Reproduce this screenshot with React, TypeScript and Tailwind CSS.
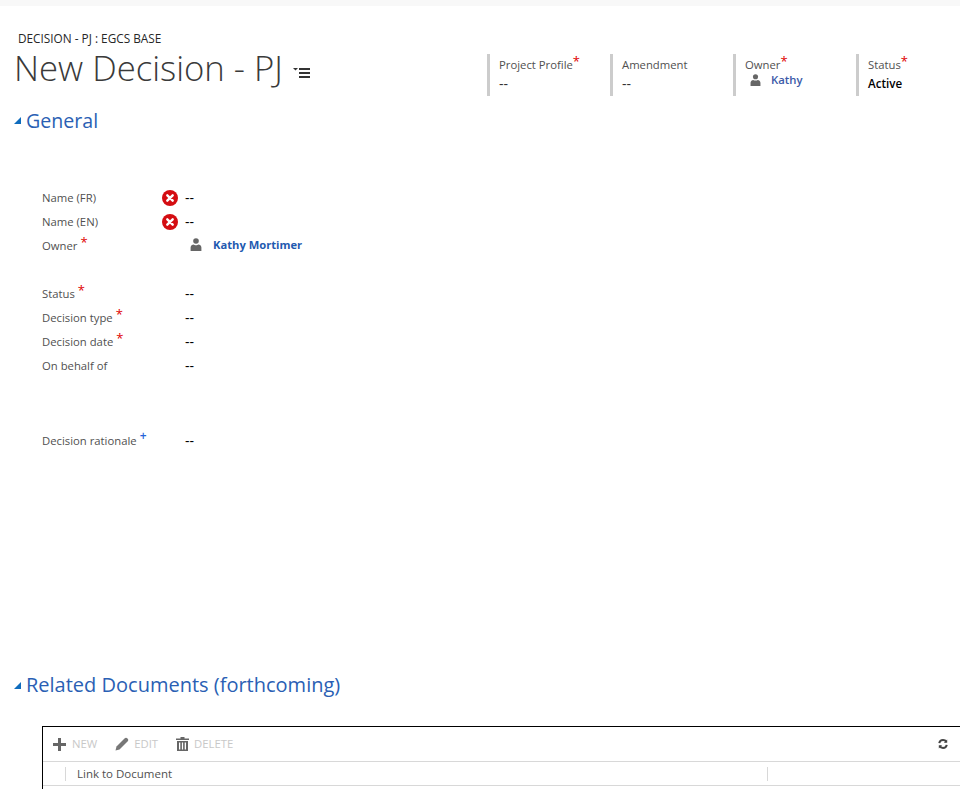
import React from "react";

const font = { fontFamily: '"Open Sans", "Noto Sans", sans-serif' };

function Person({ className }: { className?: string }) {
  return (
    <svg viewBox="0 0 12 13" className={className} fill="#666666">
      <circle cx="6" cy="3" r="2.8" />
      <path d="M0.6 13 V9.6 C0.6 7.4 2.2 6.6 3.6 6.4 C4.4 7.4 7.6 7.4 8.4 6.4 C9.8 6.6 11.4 7.4 11.4 9.6 V13 Z" />
    </svg>
  );
}

function Caret() {
  return (
    <svg viewBox="0 0 7 7" className="w-[7px] h-[7px] shrink-0" fill="#0f6cbd">
      <path d="M7 0 V7 H0 Z" />
    </svg>
  );
}

function Req() {
  return <span className="text-[#e00000] text-[13px] leading-none relative -top-[4px] ml-[3px]">*</span>;
}

function Tile({ label, req, children }: { label: string; req?: boolean; children: React.ReactNode }) {
  return (
    <div className="w-[123px] shrink-0 h-[42px] border-l-[3px] border-[#cccccc] pl-[9px]">
      <div className="h-[22px] flex items-center text-[11.3px] text-[#505050] whitespace-nowrap">
        {label}
        {req && <span className="text-[#e00000] text-[13px] leading-none relative -top-[4px]">*</span>}
      </div>
      {children}
    </div>
  );
}

function Row({ label, mark, error, children }: { label: string; mark?: "req" | "rec"; error?: boolean; children?: React.ReactNode }) {
  return (
    <div className="h-[24px] flex items-center">
      <div className="w-[120px] flex items-center text-[11.3px] text-[#505050] whitespace-nowrap">
        {label}
        {mark === "req" && <Req />}
        {mark === "rec" && <span className="text-[#2563d8] font-semibold text-[12px] leading-none relative -top-[5px] ml-[3px]">+</span>}
      </div>
      <div className="w-[23px] flex items-center">
        {error && (
          <svg viewBox="0 0 16 16" className="w-[16px] h-[16px]">
            <circle cx="8" cy="8" r="8" fill="#d40d12" />
            <path d="M5.3 5.3 L10.7 10.7 M10.7 5.3 L5.3 10.7" stroke="#ffffff" strokeWidth="2.4" strokeLinecap="round" />
          </svg>
        )}
      </div>
      {children ?? <div className="text-[14px] leading-none text-black">--</div>}
    </div>
  );
}

export default function App() {
  return (
    <div style={font} className="w-[960px] h-[789px] overflow-hidden bg-white">
      <div className="h-[6px] bg-[#f8f8f8]" />
      <div className="flex h-[90px]">
        <div className="w-[487px] shrink-0 pl-[14px] pt-[24px]">
          <div className="pl-[4px] h-[18px] flex items-center text-[11.8px] text-[#262626] whitespace-nowrap">DECISION - PJ : EGCS BASE</div>
          <div className="flex items-center h-[40px]">
            <span className="text-[34.7px] font-light text-[#3a3a3a] whitespace-nowrap leading-none">New Decision - PJ</span>
            <svg viewBox="0 0 18 11" className="w-[18px] h-[11px] ml-[10px] mt-[8px]" fill="#333333">
              <path d="M0 1 H5 L2.5 3.5 Z" />
              <rect x="6" y="1" width="11" height="2" />
              <rect x="6" y="5" width="11" height="2" />
              <rect x="6" y="9" width="11" height="2" />
            </svg>
          </div>
        </div>
        <div className="flex pt-[48px]">
          <Tile label="Project Profile" req>
            <div className="text-[14px] leading-none text-[#333333] h-[16px] flex items-center">--</div>
          </Tile>
          <Tile label="Amendment">
            <div className="text-[14px] leading-none text-[#333333] h-[16px] flex items-center">--</div>
          </Tile>
          <Tile label="Owner" req>
            <div className="h-[14px] -mt-[3px] flex items-center pl-[5px]">
              <Person className="w-[11px] h-[12px]" />
              <span className="ml-[10px] text-[11.3px] font-semibold text-[#3b5aa8]">Kathy</span>
            </div>
          </Tile>
          <Tile label="Status" req>
            <div className="text-[11.6px] font-semibold text-black h-[16px] flex items-center">Active</div>
          </Tile>
        </div>
      </div>

      <div className="flex items-center h-[50px] pl-[14px] pb-[1px]">
        <Caret />
        <span className="ml-[5px] text-[19.6px] text-[#2a5fb4] leading-none">General</span>
      </div>

      <div className="pl-[42px] pt-[40px]">
        <Row label="Name (FR)" error />
        <Row label="Name (EN)" error />
        <Row label="Owner" mark="req">
          <div className="flex items-center pl-[5px] -mt-[2px]">
            <Person className="w-[12px] h-[13px]" />
            <span className="ml-[11px] text-[11.2px] font-bold text-[#1f5ab0] whitespace-nowrap">Kathy Mortimer</span>
          </div>
        </Row>
        <div className="h-[24px]" />
        <Row label="Status" mark="req" />
        <Row label="Decision type" mark="req" />
        <Row label="Decision date" mark="req" />
        <Row label="On behalf of" />
        <div className="h-[51px]" />
        <Row label="Decision rationale" mark="rec" />
      </div>

      <div className="flex items-center h-[40px] pl-[14px] mt-[212px]">
        <Caret />
        <span className="ml-[5px] text-[20px] text-[#2a5fb4] leading-none whitespace-nowrap">Related Documents (forthcoming)</span>
      </div>

      <div className="ml-[42px] mt-[21px] border-t border-l border-black h-[80px]">
        <div className="h-[35px] flex items-center pl-[10px] pr-[12px] border-b border-[#d8d8d8]">
          <svg viewBox="0 0 13 13" className="w-[13px] h-[13px]" fill="#666666">
            <path d="M5 0 H8 V5 H13 V8 H8 V13 H5 V8 H0 V5 H5 Z" />
          </svg>
          <span className="ml-[6px] text-[11.3px] text-[#c8c8c8]">NEW</span>
          <svg viewBox="0 0 14 14" className="w-[14px] h-[14px] ml-[18px]" fill="#777777">
            <path d="M0.5 13.5 L1.5 9.5 L9.5 1.5 C10.5 0.5 11.5 0.5 12.5 1.5 C13.5 2.5 13.5 3.5 12.5 4.5 L4.5 12.5 Z" />
          </svg>
          <span className="ml-[5px] text-[11.3px] text-[#c8c8c8]">EDIT</span>
          <svg viewBox="0 0 13 14" className="w-[13px] h-[14px] ml-[18px]" fill="#666666">
            <path d="M4.5 0 H8.5 V1.5 H13 V3 H0 V1.5 H4.5 Z" />
            <path d="M1 4 H12 V14 H1 Z M3 5.5 V12.5 H4.3 V5.5 Z M5.9 5.5 V12.5 H7.1 V5.5 Z M8.7 5.5 V12.5 H10 V5.5 Z" fillRule="evenodd" />
          </svg>
          <span className="ml-[5px] text-[11.3px] text-[#c8c8c8]">DELETE</span>
          <svg viewBox="0 0 12 12" className="w-[10px] h-[10px] ml-auto" fill="none" stroke="#444444" strokeWidth="2.4">
            <path d="M1.5 5 C2 2.5 4 1.2 6 1.2 C8 1.2 9.3 2.2 10 3.5" />
            <path d="M10.5 7 C10 9.5 8 10.8 6 10.8 C4 10.8 2.7 9.8 2 8.5" />
            <path d="M11 0.5 V4.5 H7 Z" fill="#444444" stroke="none" />
            <path d="M1 11.5 V7.5 H5 Z" fill="#444444" stroke="none" />
          </svg>
        </div>
        <div className="h-[24px] flex items-center border-b border-[#d8d8d8] pl-[22px]">
          <div className="w-[703px] h-[14px] border-l border-r border-[#d8d8d8] pl-[11px] flex items-center text-[11.5px] text-[#505050]">Link to Document</div>
        </div>
      </div>
    </div>
  );
}
